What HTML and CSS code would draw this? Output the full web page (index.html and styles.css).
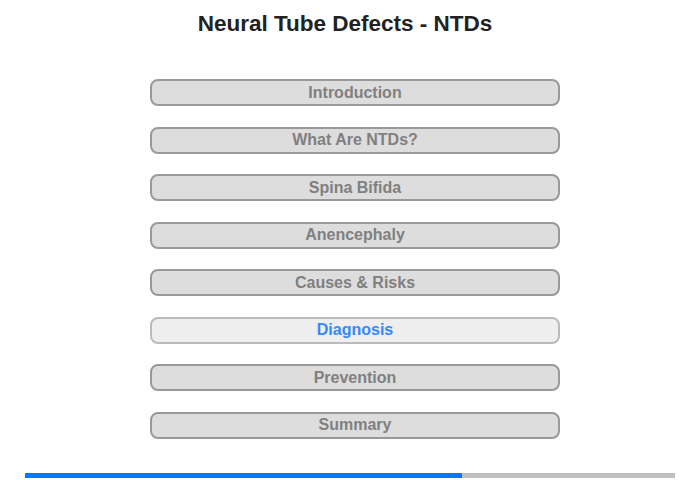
FILE: index.html
```html
<!DOCTYPE html>
<html lang="en">
<head>
    <meta charset="utf-8">
    <title>Neural Tube Defects - NTDs</title>
    <link rel="stylesheet" href="styles.css">
</head>
<body>

    <h1 class="title">Neural Tube Defects - NTDs</h1>

    <div class="menu-wrap">
        <nav class="menu">
            <button class="item">Introduction</button>
            <button class="item">What Are NTDs?</button>
            <button class="item">Spina Bifida</button>
            <button class="item">Anencephaly</button>
            <button class="item">Causes &amp; Risks</button>
            <button class="item active">Diagnosis</button>
            <button class="item">Prevention</button>
            <button class="item">Summary</button>
        </nav>
    </div>

    <div class="progress">
        <div class="progress-fill" style="width: 67.2%"></div>
    </div>

</body>
</html>
```

FILE: styles.css
```css
body {
    margin: 0;
    background-color: #fff;
    font-family: "Liberation Sans", Arial, sans-serif;
}
.title {
    margin: 11px 0 0 0;
    padding-right: 10px;
    font-size: 22.5px;
    line-height: 25px;
    font-weight: bold;
    text-align: center;
    color: #222;
}
.menu-wrap {
    padding-left: 10px;
    margin-top: 43px;
}
.menu {
    width: 410px;
    margin: 0 auto;
    display: flex;
    flex-direction: column;
    gap: 20.5px;
}
.item {
    box-sizing: border-box;
    height: 27px;
    padding: 0;
    border: 2px solid #999;
    border-radius: 8px;
    background-color: #ddd;
    color: #808080;
    font-family: inherit;
    font-size: 16px;
    font-weight: bold;
    cursor: pointer;
}
.item.active {
    background-color: #eee;
    border-color: #bbb;
    color: #3388ff;
}
.progress {
    margin: 34px 25px 0 25px;
    height: 5px;
    background-color: #c0c0c0;
}
.progress-fill {
    height: 100%;
    background-color: #007bff;
}
```
